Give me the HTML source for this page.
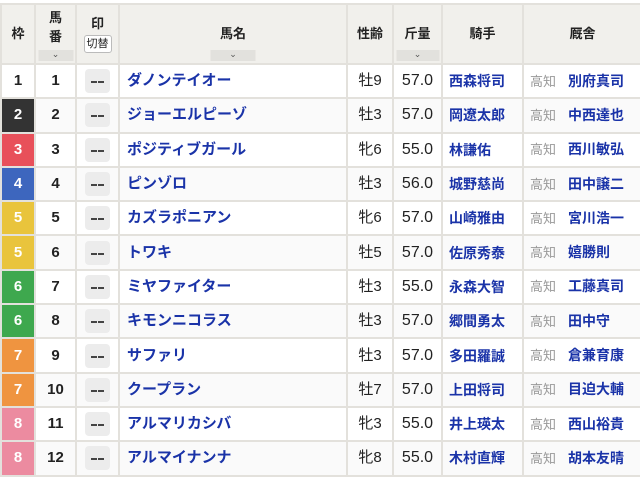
<!DOCTYPE html><html><head><meta charset="utf-8"><style>
body{margin:0;background:#fff;font-family:"Liberation Sans","Noto Sans CJK JP",sans-serif;}
table{position:absolute;left:0;top:3px;border-collapse:collapse;table-layout:fixed;width:641px;}
td,th{border:2px solid #e3e1dc;padding:0;text-align:center;font-size:14px;color:#222;overflow:hidden;white-space:nowrap;line-height:18px}
th{background:#f1f0ec;font-size:13px;font-weight:bold;height:55px;position:relative;vertical-align:middle}
td{height:32.3px}
tr:nth-child(odd) td{background:#fafafa}
.w{font-weight:bold;color:#222;font-size:15px}
.u{font-weight:bold;font-size:15px}
.n{font-weight:bold;color:#1a33a8;text-align:left;padding-left:7px;font-size:15px}
.j{font-weight:bold;color:#1a33a8;text-align:left;padding-left:6px;font-size:14px}
.t{text-align:left;padding-left:6px;font-size:14px}
.t span{color:#999;font-size:13px;margin-right:12px}
.t b{color:#1a33a8}
.m{display:inline-block;width:25px;height:24px;background:#ececec;border-radius:4px;vertical-align:middle;position:relative}
.m:before,.m:after{content:"";position:absolute;top:12px;width:6px;height:2px;background:#444}
.m:before{left:6px}.m:after{left:13px}
.sx{font-size:15px}
.k{font-size:16px}
.ar{position:absolute;bottom:2px;left:50%;transform:translateX(-50%);height:11px;background:#e2e1dd;font-size:9px;line-height:9px;color:#555;font-weight:normal}
.btn{display:inline-block;border:1px solid #bbb;border-radius:3px;background:#fff;font-weight:normal;font-size:11px;line-height:14px;padding:1px 2px;margin-top:2px}
</style></head><body>
<table>
<colgroup><col style="width:34px"><col style="width:41px"><col style="width:43px"><col style="width:228px"><col style="width:46px"><col style="width:49px"><col style="width:81px"><col style="width:119px"></colgroup>
<tr><th>枠</th><th style="vertical-align:top;padding-top:3px;line-height:19px">馬<br>番<div class="ar" style="width:35px">⌄</div></th><th>印<br><span class="btn">切替</span></th><th>馬名<div class="ar" style="width:45px">⌄</div></th><th>性齢</th><th>斤量<div class="ar" style="width:43px">⌄</div></th><th>騎手</th><th>厩舎</th></tr>
<tr><td class="w">1</td><td class="u">1</td><td><span class="m"></span></td><td class="n">ダノンテイオー</td><td class="sx">牡9</td><td class="k">57.0</td><td class="j">西森将司</td><td class="t"><span>高知</span><b>別府真司</b></td></tr>
<tr><td class="w" style="background:#333;color:#fff">2</td><td class="u">2</td><td><span class="m"></span></td><td class="n">ジョーエルピーゾ</td><td class="sx">牡3</td><td class="k">57.0</td><td class="j">岡遼太郎</td><td class="t"><span>高知</span><b>中西達也</b></td></tr>
<tr><td class="w" style="background:#e8505a;color:#fff">3</td><td class="u">3</td><td><span class="m"></span></td><td class="n">ポジティブガール</td><td class="sx">牝6</td><td class="k">55.0</td><td class="j">林謙佑</td><td class="t"><span>高知</span><b>西川敏弘</b></td></tr>
<tr><td class="w" style="background:#3d66be;color:#fff">4</td><td class="u">4</td><td><span class="m"></span></td><td class="n">ピンゾロ</td><td class="sx">牡3</td><td class="k">56.0</td><td class="j">城野慈尚</td><td class="t"><span>高知</span><b>田中譲二</b></td></tr>
<tr><td class="w" style="background:#e9c43c;color:#fff">5</td><td class="u">5</td><td><span class="m"></span></td><td class="n">カズラポニアン</td><td class="sx">牝6</td><td class="k">57.0</td><td class="j">山崎雅由</td><td class="t"><span>高知</span><b>宮川浩一</b></td></tr>
<tr><td class="w" style="background:#e9c43c;color:#fff">5</td><td class="u">6</td><td><span class="m"></span></td><td class="n">トワキ</td><td class="sx">牡5</td><td class="k">57.0</td><td class="j">佐原秀泰</td><td class="t"><span>高知</span><b>嬉勝則</b></td></tr>
<tr><td class="w" style="background:#3ea84e;color:#fff">6</td><td class="u">7</td><td><span class="m"></span></td><td class="n">ミヤファイター</td><td class="sx">牡3</td><td class="k">55.0</td><td class="j">永森大智</td><td class="t"><span>高知</span><b>工藤真司</b></td></tr>
<tr><td class="w" style="background:#3ea84e;color:#fff">6</td><td class="u">8</td><td><span class="m"></span></td><td class="n">キモンニコラス</td><td class="sx">牡3</td><td class="k">57.0</td><td class="j">郷間勇太</td><td class="t"><span>高知</span><b>田中守</b></td></tr>
<tr><td class="w" style="background:#ef9440;color:#fff">7</td><td class="u">9</td><td><span class="m"></span></td><td class="n">サファリ</td><td class="sx">牡3</td><td class="k">57.0</td><td class="j">多田羅誠</td><td class="t"><span>高知</span><b>倉兼育康</b></td></tr>
<tr><td class="w" style="background:#ef9440;color:#fff">7</td><td class="u">10</td><td><span class="m"></span></td><td class="n">クープラン</td><td class="sx">牡7</td><td class="k">57.0</td><td class="j">上田将司</td><td class="t"><span>高知</span><b>目迫大輔</b></td></tr>
<tr><td class="w" style="background:#ec8ba0;color:#fff">8</td><td class="u">11</td><td><span class="m"></span></td><td class="n">アルマリカシバ</td><td class="sx">牝3</td><td class="k">55.0</td><td class="j">井上瑛太</td><td class="t"><span>高知</span><b>西山裕貴</b></td></tr>
<tr><td class="w" style="background:#ec8ba0;color:#fff">8</td><td class="u">12</td><td><span class="m"></span></td><td class="n">アルマイナンナ</td><td class="sx">牝8</td><td class="k">55.0</td><td class="j">木村直輝</td><td class="t"><span>高知</span><b>胡本友晴</b></td></tr>
</table>
</body></html>
